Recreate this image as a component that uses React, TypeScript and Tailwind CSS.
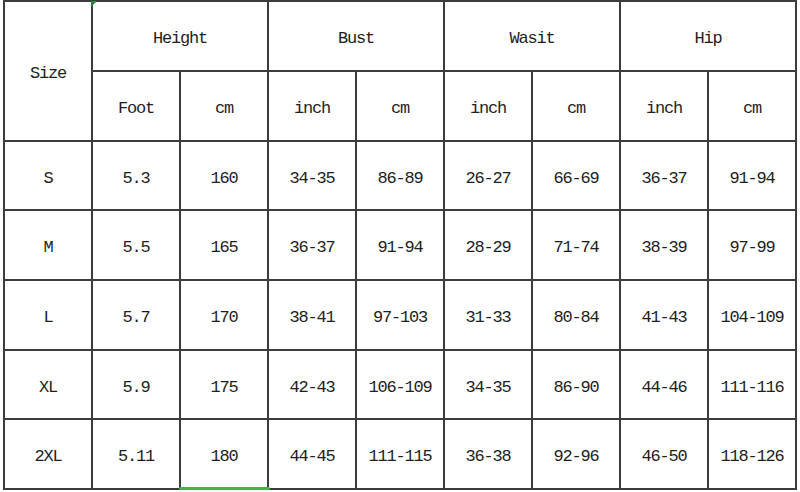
import React from "react";

const rows = [
  ["S", "5.3", "160", "34-35", "86-89", "26-27", "66-69", "36-37", "91-94"],
  ["M", "5.5", "165", "36-37", "91-94", "28-29", "71-74", "38-39", "97-99"],
  ["L", "5.7", "170", "38-41", "97-103", "31-33", "80-84", "41-43", "104-109"],
  ["XL", "5.9", "175", "42-43", "106-109", "34-35", "86-90", "44-46", "111-116"],
  ["2XL", "5.11", "180", "44-45", "111-115", "36-38", "92-96", "46-50", "118-126"],
];

const cell =
  "bg-white flex items-center justify-center pt-[6px] text-[17px] tracking-[-1.2px] text-[#1e1e1e]";

export default function App() {
  return (
    <div
      className="relative w-[800px] h-[492px] bg-white overflow-hidden"
      style={{ fontFamily: '"Liberation Mono", "DejaVu Sans Mono", monospace' }}
    >
      <div className="ml-[3px] w-[794px] p-[2px] gap-[2px] bg-[#3c3c3c] grid grid-cols-[repeat(9,86px)] grid-rows-[68px_68px_67px_68px_68px_67px_68px]">
        <div className={`${cell} row-span-2`}>Size</div>
        <div className={`${cell} col-span-2`}>Height</div>
        <div className={`${cell} col-span-2`}>Bust</div>
        <div className={`${cell} col-span-2`}>Wasit</div>
        <div className={`${cell} col-span-2`}>Hip</div>
        <div className={cell}>Foot</div>
        <div className={cell}>cm</div>
        <div className={cell}>inch</div>
        <div className={cell}>cm</div>
        <div className={cell}>inch</div>
        <div className={cell}>cm</div>
        <div className={cell}>inch</div>
        <div className={cell}>cm</div>
        {rows.map((r, i) =>
          r.map((v, j) => (
            <div key={`${i}-${j}`} className={cell}>
              {v}
            </div>
          ))
        )}
      </div>
      <svg className="absolute left-[91px] top-[1px]" width="6" height="6" viewBox="0 0 6 6">
        <polygon points="0,0 6,0 0,6" fill="#1f8a3a" />
      </svg>
      <div className="absolute left-[179px] top-[487px] w-[91px] h-[3px] rounded-[2px] bg-[#4caf50]" />
    </div>
  );
}
